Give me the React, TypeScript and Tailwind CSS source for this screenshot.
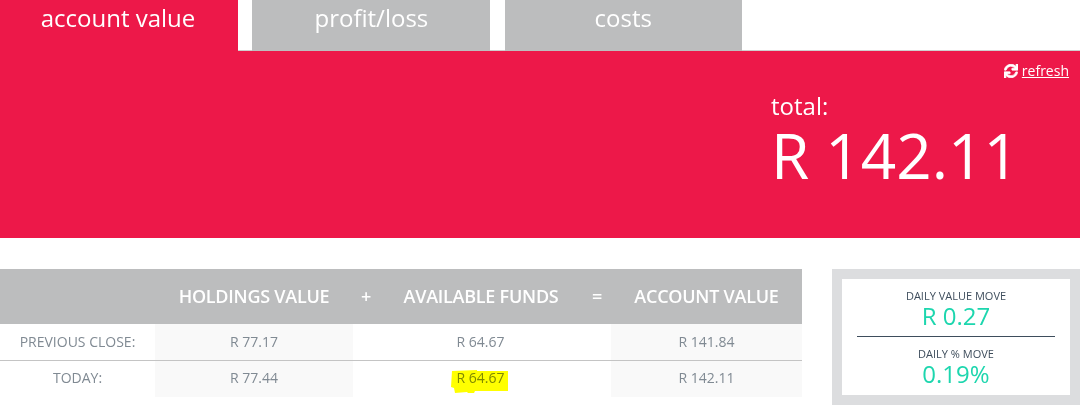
import { FaSync } from 'react-icons/fa';

const tabs = [
  { label: 'account value', width: 'w-[238px]', active: true },
  { label: 'profit/loss', width: 'w-[238px]', active: false },
  { label: 'costs', width: 'w-[237px]', active: false },
];

const rows = [
  { label: 'PREVIOUS CLOSE:', holdings: 'R 77.17', funds: 'R 64.67', account: 'R 141.84' },
  { label: 'TODAY:', holdings: 'R 77.44', funds: 'R 64.67', account: 'R 142.11' },
];

function Highlight() {
  return (
    <svg
      className="absolute left-[-7px] top-[2px] mix-blend-multiply"
      width="60"
      height="26"
      viewBox="0 0 60 26"
    >
      <path d="M2 2 L27 1 L27 2 L58 2 L58 22 L25 22 L24 24 L18 24 L17 23 L5 24 L4 19 L1 18 Z" fill="#ffff00" />
    </svg>
  );
}

export default function App() {
  return (
    <div className="w-[1080px] h-[406px] overflow-hidden bg-white font-['Open_Sans',sans-serif]">
      <div className="flex gap-[14.4px] h-[51px] border-b border-[#cfcfcf]">
        {tabs.map((tab) => (
          <div
            key={tab.label}
            className={`${tab.width} h-[51px] shrink-0 text-center text-[24px] leading-[36px] text-white ${
              tab.active ? 'bg-[#ed1849] pr-[2px]' : 'bg-[#bcbdbe]'
            }`}
          >
            {tab.label}
          </div>
        ))}
      </div>

      <div className="h-[187px] bg-[#ed1849] text-white flex flex-col items-end pr-[11px] pt-[10px]">
        <a className="flex items-center gap-[4px] text-[14px] leading-[19px] underline">
          <FaSync className="w-[14px] h-[14px]" stroke="currentColor" strokeWidth={28} />
          refresh
        </a>
        <div className="w-[298px] mt-[12px]">
          <div className="text-[24px] leading-[28px]">total:</div>
          <div className="text-[62px] leading-[72px] mt-[-1px]">R 142.11</div>
        </div>
      </div>

      <div className="flex mt-[31px]">
        <div className="w-[802px]">
          <div className="grid grid-cols-[155px_198px_26px_204px_28px_191px] h-[55px] items-center bg-[#bcbdbe] text-center text-[18px] font-semibold text-white tracking-[-0.25px]">
            <div />
            <div>HOLDINGS VALUE</div>
            <div>+</div>
            <div>AVAILABLE FUNDS</div>
            <div>=</div>
            <div>ACCOUNT VALUE</div>
          </div>
          {rows.map((row, i) => {
            const cell = `flex items-center justify-center ${i === 0 ? 'pb-[2px]' : 'pb-[4px]'}`;
            return (
              <div
                key={row.label}
                className={`grid grid-cols-[155px_198px_230px_28px_191px] text-center text-[14px] text-[#808a93] ${
                  i === 0 ? 'h-[37px] border-b border-[#c4c4c4]' : 'h-[36px]'
                }`}
              >
                <div className={cell}>{row.label}</div>
                <div className={`${cell} bg-[#f9f9f9]`}>{row.holdings}</div>
                <div className={`${cell} col-span-2 pr-[3px]`}>
                  <span className="relative">
                    {row.funds}
                    {i === 1 && <Highlight />}
                  </span>
                </div>
                <div className={`${cell} bg-[#f9f9f9]`}>{row.account}</div>
              </div>
            );
          })}
        </div>

        <div className="ml-[30px] w-[248px] h-[136px] bg-[#dcdddf] p-[10px]">
          <div className="h-[116px] bg-white text-center">
            <div className="pt-[9px] text-[11px] leading-[15px] text-[#3e4d5c]">DAILY VALUE MOVE</div>
            <div className="text-[24px] leading-[26px] text-[#1dd6ae]">R 0.27</div>
            <div className="mx-[15px] mt-[7px] border-t border-[#3e4d5c]" />
            <div className="pt-[9px] text-[11px] leading-[15px] text-[#3e4d5c]">DAILY % MOVE</div>
            <div className="text-[24px] leading-[26px] text-[#1dd6ae]">0.19%</div>
          </div>
        </div>
      </div>
    </div>
  );
}
